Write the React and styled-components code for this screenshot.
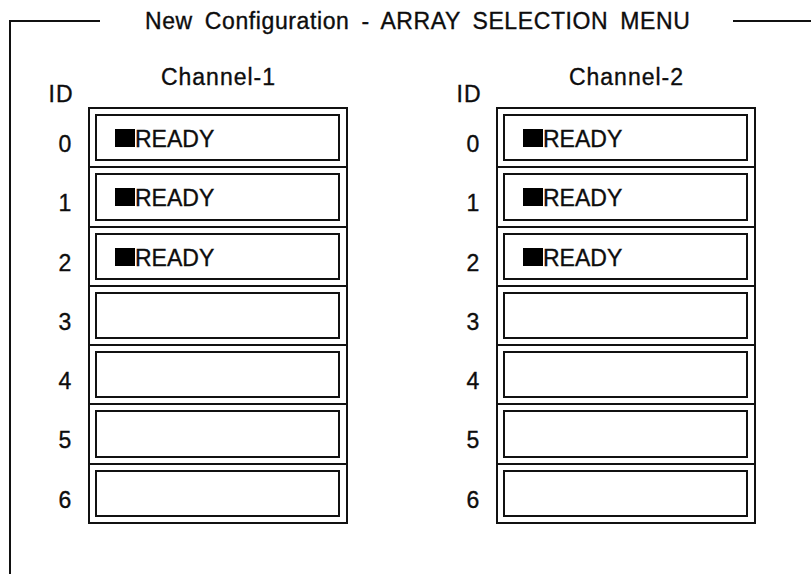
import React from 'react';
import styled, { createGlobalStyle } from 'styled-components';

const Global = createGlobalStyle`
  html, body { margin: 0; padding: 0; background: #fff; overflow: hidden; }
  body {
    font-family: "Liberation Sans", Arial, Helvetica, sans-serif;
    color: #0d0d0d;
    -webkit-text-stroke: 0.35px #0d0d0d;
  }
`;

const Frame = styled.fieldset`
  box-sizing: border-box;
  margin: 6px 0 0 9px;
  padding: 30px 0 0 0;
  height: calc(100vh - 6px);
  min-width: 0;
  border: 0;
  border-top: 2px solid #111;
  border-left: 2px solid #111;
`;

const Legend = styled.legend`
  margin-left: 89px;
  padding: 0 43px 0 45px;
  font-size: 23px;
  line-height: 30px;
  letter-spacing: 0.6px;
  word-spacing: 5px;
  white-space: nowrap;
`;

const Channels = styled.div`
  display: flex;
  gap: 94px;
  padding-left: 23px;
`;

const Channel = styled.section`
  display: grid;
  grid-template-columns: 54px 260px;
  grid-template-rows: auto auto;
`;

const IdHead = styled.div`
  font-size: 23px;
  line-height: 22px;
  letter-spacing: 1px;
  text-align: center;
  align-self: end;
  margin-bottom: 2px;
`;

const ChannelTitle = styled.div`
  font-size: 23px;
  line-height: 23px;
  letter-spacing: 1px;
  padding-left: 1px;
  text-align: center;
  margin-bottom: 18px;
`;

const IdList = styled.div`
  display: flex;
  flex-direction: column;
`;

const IdCell = styled.div`
  box-sizing: border-box;
  height: 59.3px;
  padding: 26px 0 0 8px;
  font-size: 23px;
  line-height: 22px;
  text-align: center;
`;

const OuterBox = styled.div`
  box-sizing: border-box;
  width: 260px;
  border: 2px solid #111;
`;

const Slot = styled.div`
  padding: 5px 6px 5px 5px;
  & + & {
    border-top: 2px solid #111;
  }
`;

const Drive = styled.div`
  box-sizing: border-box;
  height: 47.3px;
  border: 2px solid #111;
  display: flex;
  align-items: center;
  padding: 4px 0 0 18px;
`;

const Status = styled.span`
  font-size: 23px;
  line-height: 23px;
  white-space: nowrap;
`;

const Mark = styled.span`
  display: inline-block;
  width: 20px;
  height: 18px;
  background: #000;
  vertical-align: baseline;
`;

const channels = [
  { name: 'Channel-1', drives: ['READY', 'READY', 'READY', '', '', '', ''] },
  { name: 'Channel-2', drives: ['READY', 'READY', 'READY', '', '', '', ''] },
];

export default function App() {
  return (
    <>
      <Global />
      <Frame>
        <Legend>New Configuration - ARRAY SELECTION MENU</Legend>
        <Channels>
          {channels.map((ch) => (
            <Channel key={ch.name}>
              <IdHead>ID</IdHead>
              <ChannelTitle>{ch.name}</ChannelTitle>
              <IdList>
                {ch.drives.map((_, i) => (
                  <IdCell key={i}>{i}</IdCell>
                ))}
              </IdList>
              <OuterBox>
                {ch.drives.map((d, i) => (
                  <Slot key={i}>
                    <Drive>
                      {d && (
                        <Status>
                          <Mark />
                          {d}
                        </Status>
                      )}
                    </Drive>
                  </Slot>
                ))}
              </OuterBox>
            </Channel>
          ))}
        </Channels>
      </Frame>
    </>
  );
}
